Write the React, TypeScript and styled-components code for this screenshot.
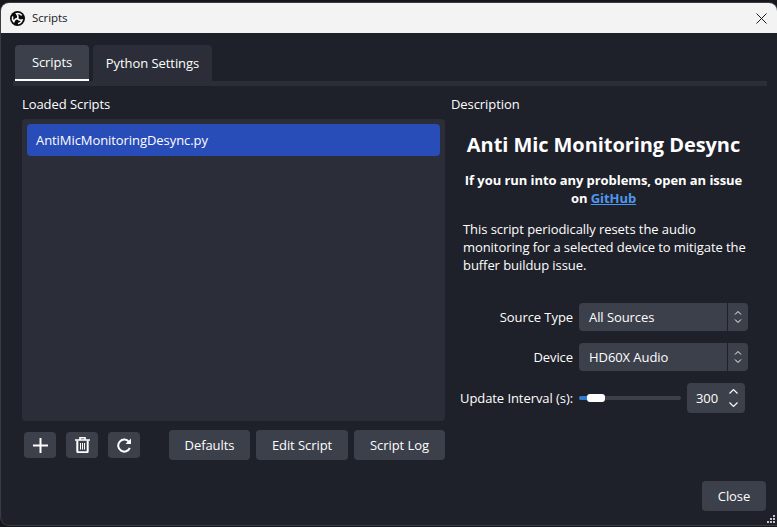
import React from 'react';
import styled, { createGlobalStyle } from 'styled-components';

const colors = {
  desktop: '#16171c',
  bg: '#1f212a',
  panel: '#2b2e38',
  control: '#3c404b',
  selected: '#284cb8',
  text: '#fefefe',
  link: '#4f97ee',
  accent: '#2f7bd6',
};

const GlobalStyle = createGlobalStyle`
  html, body {
    margin: 0;
    height: 527px;
    overflow: hidden;
    background: ${colors.desktop};
  }
  * {
    box-sizing: border-box;
  }
`;

const Page = styled.div`
  padding: 3px 0 2px 1px;
  height: 527px;
`;

const Window = styled.div`
  position: relative;
  display: flex;
  flex-direction: column;
  height: 522px;
  border-radius: 8px 8px 0 8px;
  overflow: hidden;
  background: ${colors.bg};
  box-shadow: 0 0 0 1px #3a3c44;
  color: ${colors.text};
  font-family: 'Open Sans', 'Noto Sans', sans-serif;
  font-size: 13px;
  line-height: 18px;
  letter-spacing: -0.07px;
`;

const TitleBar = styled.div`
  display: flex;
  align-items: center;
  height: 30px;
  flex: none;
  padding: 0 10px 0 9px;
  background: #f3f3f3;
  color: #1a1a1a;
  font-size: 11.5px;
  letter-spacing: -0.1px;
`;

const TitleText = styled.span`
  margin-left: 7px;
  flex: 1;
`;

const TabBar = styled.div`
  display: flex;
  gap: 4px;
  margin: 12px 0 0 14px;
`;

const Tab = styled.div<{ $active?: boolean }>`
  display: flex;
  align-items: center;
  justify-content: center;
  height: 36px;
  width: ${({ $active }) => ($active ? '74px' : '119px')};
  border-radius: 4px 4px 0 0;
  background: ${({ $active }) => ($active ? colors.control : colors.panel)};
  border-bottom: ${({ $active }) => ($active ? `2px solid ${colors.text}` : 'none')};
`;

const TabLine = styled.div`
  height: 5px;
  margin: 0 10px 0 12px;
  background: ${colors.panel};
`;

const Panes = styled.div`
  display: grid;
  grid-template-columns: 423px 1fr;
  column-gap: 6px;
  padding: 9px 29px 0 21px;
`;

const Column = styled.div`
  display: flex;
  flex-direction: column;
  min-width: 0;
`;

const PaneLabel = styled.div`
  height: 18px;
  margin-bottom: 6px;
`;

const ScriptList = styled.div`
  height: 302px;
  padding: 5px;
  border-radius: 4px;
  background: ${colors.panel};
`;

const ScriptItem = styled.div`
  display: flex;
  align-items: center;
  height: 32px;
  padding-left: 9px;
  border-radius: 4px;
  background: ${colors.selected};
`;

const ListToolbar = styled.div`
  display: flex;
  align-items: center;
  margin-top: 9px;
  padding-left: 2px;
`;

const IconButton = styled.div`
  display: flex;
  align-items: center;
  justify-content: center;
  width: 32px;
  height: 26px;
  margin-right: 10px;
  border-radius: 4px;
  background: ${colors.control};
`;

const ActionButtons = styled.div`
  display: flex;
  gap: 6px;
  margin-left: auto;
`;

const Button = styled.div<{ $width: number }>`
  display: flex;
  align-items: center;
  justify-content: center;
  width: ${({ $width }) => $width}px;
  height: 30px;
  border-radius: 4px;
  background: ${colors.control};
`;

const Description = styled.div`
  display: flex;
  flex-direction: column;
  padding: 0 4px 0 12px;
`;

const Heading = styled.h1`
  margin: 12px 0 0;
  font-size: 20px;
  line-height: 27px;
  font-weight: 700;
  text-align: center;
  white-space: nowrap;
`;

const Notice = styled.p`
  margin: 13px 0 0;
  font-weight: 700;
  line-height: 18px;
  text-align: center;
  white-space: nowrap;
`;

const Link = styled.a`
  color: ${colors.link};
  text-decoration: underline;
`;

const Summary = styled.p`
  margin: 13px 0 0;
  line-height: 18px;
  white-space: nowrap;
`;

const Form = styled.div`
  display: grid;
  grid-template-columns: auto 169px;
  justify-content: end;
  align-items: center;
  column-gap: 6px;
  row-gap: 12px;
  margin: 29px -4px 0 -3px;
`;

const FieldLabel = styled.div`
  text-align: right;
  white-space: nowrap;
`;

const Combo = styled.div`
  display: flex;
  height: 28px;
  border-radius: 4px;
  overflow: hidden;
  background: ${colors.control};
`;

const ComboValue = styled.div`
  flex: 1;
  display: flex;
  align-items: center;
  padding-left: 10px;
  border-right: 1px solid ${colors.bg};
`;

const ComboArrows = styled.div`
  display: flex;
  align-items: center;
  justify-content: center;
  width: 20px;
`;

const SliderRow = styled.div`
  display: flex;
  align-items: center;
  gap: 6px;
`;

const SliderTrack = styled.div`
  position: relative;
  width: 102px;
  height: 4px;
  border-radius: 2px;
  background: ${colors.control};
`;

const SliderFill = styled.div`
  width: 12px;
  height: 4px;
  border-radius: 2px;
  background: ${colors.accent};
`;

const SliderHandle = styled.div`
  position: absolute;
  top: -2px;
  left: 8px;
  width: 18px;
  height: 8px;
  border-radius: 3px;
  background: #fff;
`;

const SpinBox = styled.div`
  display: flex;
  align-items: center;
  justify-content: space-between;
  width: 58px;
  height: 30px;
  padding: 0 7px 0 9px;
  border-radius: 4px;
  background: ${colors.control};
`;

const SpinArrows = styled.div`
  display: flex;
  flex-direction: column;
  gap: 8px;
`;

const Footer = styled.div`
  display: flex;
  justify-content: flex-end;
  margin-top: auto;
  padding: 0 11px 14px 0;
`;

const SizeGrip = styled.svg`
  position: absolute;
  right: 1px;
  bottom: 1px;
`;

const swirl = 'M15 15c1.500-3 1-6.500-1.800-9.500 3.500-.8 7 0 9.300 2.500';

const ObsLogo = () => (
  <svg width="15" height="15" viewBox="0 0 30 30">
    <circle cx="15" cy="15" r="15" fill="#0b0b0b" />
    <g fill="none" stroke="#fff" strokeWidth="3" strokeLinecap="round">
      <path d={swirl} />
      <path d={swirl} transform="rotate(120 15 15)" />
      <path d={swirl} transform="rotate(240 15 15)" />
    </g>
  </svg>
);

const CloseIcon = () => (
  <svg width="11" height="11" viewBox="0 0 11 11" fill="none" stroke="#1a1a1a" strokeWidth="1">
    <path d="M.5.500l10 10M10.500.500l-10 10" />
  </svg>
);

const PlusIcon = () => (
  <svg width="15" height="15" viewBox="0 0 15 15" fill="none" stroke="#fefefe" strokeWidth="2">
    <path d="M7.500 0v15M0 7.500h15" />
  </svg>
);

const TrashIcon = () => (
  <svg width="15" height="16" viewBox="0 0 15 16" fill="none" stroke="#fefefe" strokeWidth="1.600">
    <path d="M0 3h15M5 2.500V.8h5v1.700" />
    <path d="M2.300 3.500v10.700q0 1 1 1h8.400q1 0 1-1V3.500" strokeWidth="2" />
    <path d="M5.500 6v6.500M7.500 6v6.500M9.500 6v6.500" strokeWidth="1" />
  </svg>
);

const ReloadIcon = () => (
  <svg width="16" height="15" viewBox="0 0 16 15" fill="none" stroke="#fefefe" strokeWidth="2">
    <path d="M13.800 9.800a6 6 0 1 1-.8-5.800" />
    <path d="M15 .5v5.500h-5.500z" fill="#fefefe" stroke="none" />
  </svg>
);

const UpDownIcon = () => (
  <svg width="8" height="14" viewBox="0 0 8 14" fill="none" stroke="#fefefe" strokeWidth="1">
    <path d="M1 4.500l3-3 3 3M1 9.500l3 3 3-3" />
  </svg>
);

const Chevron = ({ down }: { down?: boolean }) => (
  <svg width="9" height="5" viewBox="0 0 9 5" fill="none" stroke="#fefefe" strokeWidth="1.100" style={{ display: 'block' }}>
    <path d={down ? 'M.5.500l4 4 4-4' : 'M.5 4.500l4-4 4 4'} />
  </svg>
);

const App = () => (
  <Page>
    <GlobalStyle />
    <Window>
      <TitleBar>
        <ObsLogo />
        <TitleText>Scripts</TitleText>
        <CloseIcon />
      </TitleBar>
      <TabBar>
        <Tab $active>Scripts</Tab>
        <Tab>Python Settings</Tab>
      </TabBar>
      <TabLine />
      <Panes>
        <Column>
          <PaneLabel>Loaded Scripts</PaneLabel>
          <ScriptList>
            <ScriptItem>AntiMicMonitoringDesync.py</ScriptItem>
          </ScriptList>
          <ListToolbar>
            <IconButton><PlusIcon /></IconButton>
            <IconButton><TrashIcon /></IconButton>
            <IconButton><ReloadIcon /></IconButton>
            <ActionButtons>
              <Button $width={81}>Defaults</Button>
              <Button $width={92}>Edit Script</Button>
              <Button $width={91}>Script Log</Button>
            </ActionButtons>
          </ListToolbar>
        </Column>
        <Column>
          <PaneLabel>Description</PaneLabel>
          <Description>
            <Heading>Anti Mic Monitoring Desync</Heading>
            <Notice>
              If you run into any problems, open an issue
              <br />
              on <Link>GitHub</Link>
            </Notice>
            <Summary>
              This script periodically resets the audio
              <br />
              monitoring for a selected device to mitigate the
              <br />
              buffer buildup issue.
            </Summary>
            <Form>
              <FieldLabel>Source Type</FieldLabel>
              <Combo>
                <ComboValue>All Sources</ComboValue>
                <ComboArrows><UpDownIcon /></ComboArrows>
              </Combo>
              <FieldLabel>Device</FieldLabel>
              <Combo>
                <ComboValue>HD60X Audio</ComboValue>
                <ComboArrows><UpDownIcon /></ComboArrows>
              </Combo>
              <FieldLabel>Update Interval (s):</FieldLabel>
              <SliderRow>
                <SliderTrack>
                  <SliderFill />
                  <SliderHandle />
                </SliderTrack>
                <SpinBox>
                  300
                  <SpinArrows>
                    <Chevron />
                    <Chevron down />
                  </SpinArrows>
                </SpinBox>
              </SliderRow>
            </Form>
          </Description>
        </Column>
      </Panes>
      <Footer>
        <Button $width={64}>Close</Button>
      </Footer>
      <SizeGrip width="9" height="9" viewBox="0 0 9 9" fill="#c8c8c8">
        <rect x="6" y="0" width="2" height="2" />
        <rect x="3" y="3" width="2" height="2" />
        <rect x="6" y="3" width="2" height="2" />
        <rect x="0" y="6" width="2" height="2" />
        <rect x="3" y="6" width="2" height="2" />
        <rect x="6" y="6" width="2" height="2" />
      </SizeGrip>
    </Window>
  </Page>
);

export default App;
